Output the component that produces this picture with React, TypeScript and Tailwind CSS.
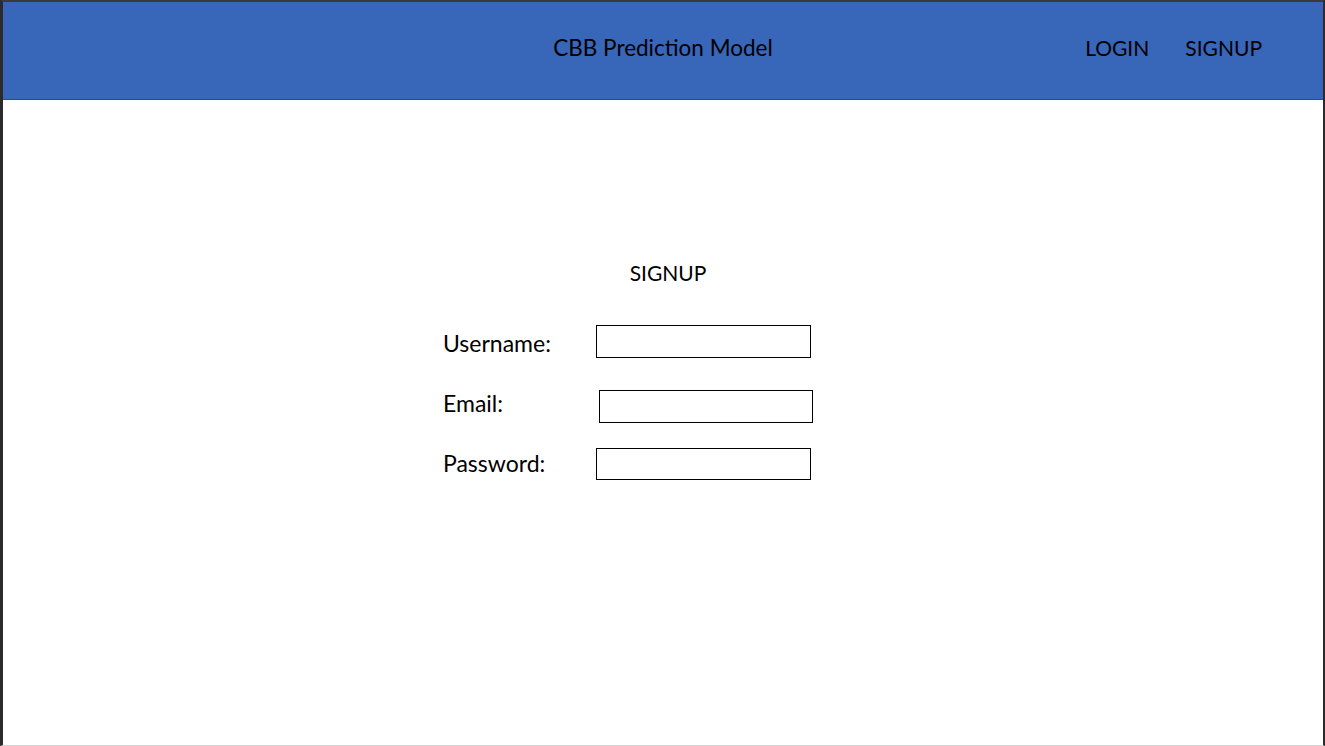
export default function App() {
  const font = { fontFamily: "Lato, 'Open Sans', sans-serif" }
  return (
    <div
      className="w-[1325px] h-[746px] bg-white border-l-[3px] border-l-[#2b2b2b] border-r-[2px] border-r-[#2b2b2b] border-t-2 border-t-[#3a3a3a] border-b border-b-[#d4d4d4] flex flex-col text-black"
      style={font}
    >
      {/* Header */}
      <header className="relative h-[98px] shrink-0 bg-[#3866b9] border-b border-[#2a4d8c] flex items-center justify-center">
        <span className="text-[22.5px] leading-[30px] -mt-[5px]">CBB Prediction Model</span>
        <nav className="absolute right-[61px] top-0 h-full flex items-center gap-[36px] text-[21px] leading-[30px] -mt-[3px]">
          <span>LOGIN</span>
          <span>SIGNUP</span>
        </nav>
      </header>

      {/* Form */}
      <main className="flex-1 flex flex-col">
        <div className="mt-[158px] text-center text-[21px] leading-[30px] pl-[10px]">SIGNUP</div>
        <div className="ml-[440px] mt-[37px] flex flex-col text-[23px] leading-[30px]">
          <div className="flex items-center">
            <span className="w-[153px] mt-[3px]">Username:</span>
            <input className="w-[215px] h-[33px] border border-black outline-none" />
          </div>
          <div className="flex items-center mt-[32px]">
            <span className="w-[156px] -mt-[8px]">Email:</span>
            <input className="w-[214px] h-[33px] border border-black outline-none" />
          </div>
          <div className="flex items-center mt-[25px]">
            <span className="w-[153px] -mt-[3px]">Password:</span>
            <input className="w-[215px] h-[32px] border border-black outline-none" />
          </div>
        </div>
      </main>
    </div>
  )
}
